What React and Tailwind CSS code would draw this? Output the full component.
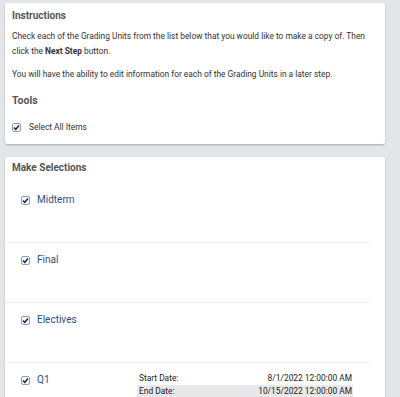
import React from "react";

const units = [
    { name: "Midterm" },
    { name: "Final" },
    { name: "Electives" },
    { name: "Q1", start: "8/1/2022 12:00:00 AM", end: "10/15/2022 12:00:00 AM" }
];

function Check() {
    return (
        <svg width="9" height="9" viewBox="0 0 9 9" className="shrink-0">
            <rect x="0.5" y="0.5" width="8" height="8" rx="1.5" fill="#f4f7fb" stroke="#8aa0bf" />
            <path d="M2 4.6 L3.8 6.3 L7 2.6" fill="none" stroke="#1f2d4d" strokeWidth="1.5" />
        </svg>
    );
}

export default function App() {
    return (
        <div className="h-[397px] overflow-hidden bg-[#e4e5e9] pt-[3px] pl-[5px] pr-[15px] font-['Roboto',sans-serif]">
            {/* Instructions card */}
            <div className="bg-white rounded-[2px] shadow-[0_1px_2px_rgba(0,0,0,0.25)] pl-[7px] pr-[10px] pt-[7px] h-[141px]">
                <h2 className="text-[10px] font-bold text-[#555] leading-[12px]">Instructions</h2>
                <p className="mt-[6.5px] text-[8.4px] leading-[15px] text-[#333]">
                    Check each of the Grading Units from the list below that you would like to make a copy of. Then
                    click the <b>Next Step</b> button.
                </p>
                <p className="mt-[8px] text-[8.4px] leading-[15px] text-[#333]">
                    You will have the ability to edit information for each of the Grading Units in a later step.
                </p>
                <h2 className="mt-[12px] text-[10.5px] font-bold text-[#555] leading-[13px]">Tools</h2>
                <label className="mt-[14.5px] flex items-center gap-[8px] text-[8.4px] leading-[12px] text-[#333]">
                    <Check />
                    Select All Items
                </label>
            </div>

            {/* Selections card */}
            <div className="mt-[13px] bg-white rounded-t-[2px] shadow-[0_1px_2px_rgba(0,0,0,0.25)] pt-[5px] h-[240px] overflow-hidden">
                <h2 className="px-[7px] text-[10px] font-bold text-[#555] leading-[12px]">Make Selections</h2>
                <div className="mt-[8px] mr-[15px]">
                    {units.map((u, i) => (
                        <div key={i} className={`flex h-[60px] ${i > 0 ? "border-t border-[#eeeeee] pt-[8.5px]" : "pt-[9.5px]"}`}>
                            <div className="flex items-start gap-[7px] pl-[16px] w-[132px] pt-[2px]">
                                <div className="mt-[2.5px]"><Check /></div>
                                <span className="text-[10px] leading-[12px] text-[#2c4f86]">{u.name}</span>
                            </div>
                            {u.start && (
                                <div className="w-[216px] text-[8.4px] text-[#222] leading-[13px]">
                                    <div className="flex justify-between pl-[2px] pr-[1px]">
                                        <span>Start Date:</span>
                                        <span>{u.start}</span>
                                    </div>
                                    <div className="flex justify-between pl-[2px] pr-[1px] bg-[#e8e8ea]">
                                        <span>End Date:</span>
                                        <span>{u.end}</span>
                                    </div>
                                </div>
                            )}
                        </div>
                    ))}
                </div>
            </div>
        </div>
    );
}
